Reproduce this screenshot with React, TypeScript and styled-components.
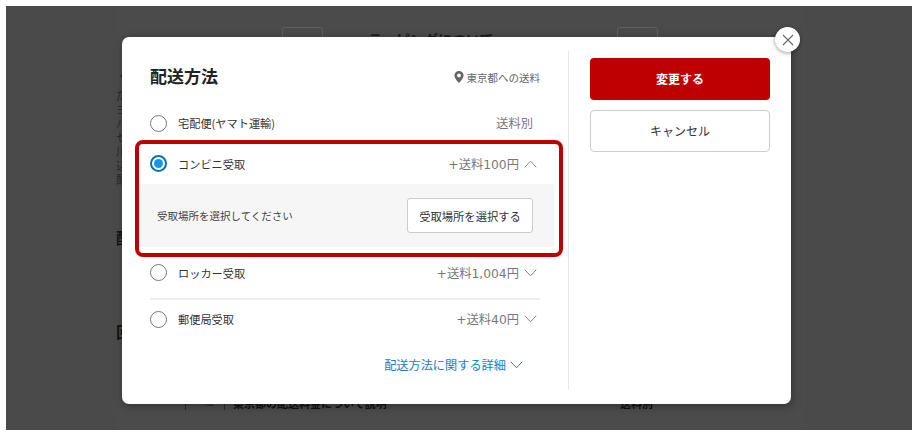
import React from "react";
import styled, { createGlobalStyle } from "styled-components";

const Global = createGlobalStyle`
  html, body { margin: 0; padding: 0; background: #fff; }
  body { font-family: "Noto Sans CJK JP", "Noto Sans", sans-serif; overflow: hidden; }
  * { box-sizing: border-box; }
`;

const Stage = styled.div`
  padding: 6px;
  width: 918px;
  height: 435px;
`;
const Backdrop = styled.div`
  position: relative;
  width: 906px;
  height: 424px;
  background: #4a4a4a;
  overflow: hidden;
`;
const Sheet = styled.div`
  margin-left: 110px;
  padding-top: 21px;
  width: 690px;
  height: 424px;
  background: #4b4b4b;
  color: #222;
  white-space: nowrap;
  overflow: hidden;
`;
const SheetTop = styled.div`
  display: flex;
  align-items: flex-start;
  height: 10px;
  overflow: hidden;
`;
const GhostButton = styled.div<{ $left: number }>`
  flex: none;
  margin-left: ${(p) => p.$left}px;
  width: 41px;
  height: 30px;
  border: 1px solid #5e5e5e;
  border-radius: 3px;
  font-size: 11px;
  line-height: 26px;
  text-align: center;
  color: #333;
`;
const SheetTitle = styled.div`
  flex: none;
  margin-left: 45px;
  margin-top: 2px;
  width: 249px;
  font-size: 14px;
  line-height: 20px;
  font-weight: 700;
  color: #1d1d1d;
`;
const EdgeStrip = styled.div`
  width: 6px;
  overflow: hidden;
`;
const NoteStrip = styled(EdgeStrip)`
  margin-top: 31px;
`;
const NoteLine = styled.div`
  font-size: 11px;
  line-height: 14px;
  color: #2a2a2a;
`;
const Notes = styled.div`
  margin-top: 6px;
`;
const SheetHeading = styled(EdgeStrip)<{ $before: number }>`
  margin-top: ${(p) => p.$before}px;
  font-size: 16px;
  line-height: 18px;
  font-weight: 700;
  color: #151515;
`;
const SheetRow = styled.div`
  display: flex;
  align-items: flex-end;
  height: 6px;
  margin-top: 64px;
  padding-left: 69px;
  overflow: hidden;
  font-size: 11px;
  line-height: 13px;
`;
const SheetTag = styled.span`
  flex: none;
  width: 40px;
  height: 16px;
  border: 1px solid #2a2a2a;
  border-bottom: 0;
  margin-right: 8px;
  font-size: 9px;
  text-align: center;
`;
const SheetStrong = styled.span`
  flex: none;
  width: 295px;
  font-weight: 700;
  color: #111;
`;
const SheetFee = styled.span`
  margin-left: 92px;
  font-weight: 700;
  color: #111;
`;

const Modal = styled.div`
  position: absolute;
  left: 116px;
  top: 31px;
  width: 669px;
  height: 367px;
  background: #fff;
  border-radius: 7px;
  box-shadow: 1px 2px 8px rgba(0, 0, 0, 0.35);
  display: flex;
  align-items: stretch;
`;
const MainCol = styled.section`
  position: relative;
  width: 447px;
  margin: 14px 0 14px;
  padding: 0 28px;
  border-right: 1px solid #e8e8e8;
`;
const Header = styled.header`
  display: flex;
  align-items: center;
  justify-content: space-between;
  height: 52px;
`;
const Title = styled.h2`
  margin: 0 0 2px;
  font-size: 17px;
  line-height: 24px;
  font-weight: 600;
  color: #222;
`;
const Destination = styled.div`
  display: flex;
  align-items: center;
  gap: 3px;
  font-size: 10.5px;
  color: #666;
`;
const Row = styled.div<{ $h: number; $line?: boolean }>`
  display: flex;
  align-items: center;
  height: ${(p) => p.$h}px;
  border-bottom: ${(p) => (p.$line ? "2px solid #eee" : "0")};
`;
const Radio = styled.span<{ $on?: boolean }>`
  flex: none;
  width: 17px;
  height: 17px;
  border-radius: 50%;
  border: ${(p) => (p.$on ? "2px solid #0d6fb3" : "1.5px solid #777")};
  display: flex;
  align-items: center;
  justify-content: center;
  margin-right: 11px;
  &::after {
    content: "";
    display: ${(p) => (p.$on ? "block" : "none")};
    width: 9px;
    height: 9px;
    border-radius: 50%;
    background: #0b98f0;
  }
`;
const Label = styled.span`
  flex: 1;
  font-size: 11.2px;
  color: #333;
`;
const Price = styled.span<{ $pad?: number }>`
  font-family: "DejaVu Sans", "Noto Sans CJK JP", sans-serif;
  font-size: 12.3px;
  color: #777;
  padding-right: ${(p) => p.$pad ?? 0}px;
`;
const ChevronBox = styled.svg`
  flex: none;
  display: block;
  width: 13px;
  height: 8px;
`;
const RowChevron = styled(ChevronBox)`
  margin: 0 3px 0 5px;
`;
const Detail = styled.div`
  display: flex;
  align-items: center;
  justify-content: space-between;
  margin: 0 -14px;
  padding: 0 21px;
  height: 63px;
  background: #f6f6f6;
  font-size: 10.5px;
  color: #444;
`;
const PickButton = styled.button`
  width: 126px;
  height: 35px;
  padding: 0;
  background: #fff;
  border: 1px solid #ccc;
  border-radius: 3px;
  font: inherit;
  font-size: 11.3px;
  color: #333;
`;
const MoreLink = styled.a`
  display: flex;
  align-items: center;
  justify-content: flex-end;
  gap: 4px;
  margin-top: 15px;
  padding-right: 17px;
  height: 24px;
  font-size: 12.2px;
  color: #1a7dbd;
`;
const Highlight = styled.div`
  position: absolute;
  left: -1px;
  top: 89px;
  margin-left: 14px;
  width: 428px;
  height: 117px;
  border: 4px solid #bf0000;
  border-radius: 8px;
  pointer-events: none;
`;
const SideCol = styled.aside`
  flex: 1;
  padding: 21px 21px 0;
  display: flex;
  flex-direction: column;
  gap: 10px;
`;
const Action = styled.button<{ $primary?: boolean }>`
  width: 180px;
  height: 42px;
  padding: 0 0 2px;
  border-radius: 4px;
  font-family: inherit;
  font-size: 12px;
  font-weight: ${(p) => (p.$primary ? 700 : 400)};
  color: ${(p) => (p.$primary ? "#fff" : "#333")};
  background: ${(p) => (p.$primary ? "#bf0000" : "#fff")};
  border: ${(p) => (p.$primary ? "0" : "1px solid #ccc")};
`;
const Close = styled.button`
  position: absolute;
  left: 653px;
  top: -10px;
  width: 25px;
  height: 25px;
  padding: 0;
  border: 0;
  border-radius: 50%;
  background: #fff;
  box-shadow: 0 1px 4px rgba(0, 0, 0, 0.4);
  display: flex;
  align-items: center;
  justify-content: center;
`;

const Chevron = ({ up, color = "#888" }: { up?: boolean; color?: string }) => (
  <RowChevron viewBox="0 0 13 8" fill="none" stroke={color} strokeWidth="1">
    <path d={up ? "M.8 7.2 6.5 1.2l5.7 6" : "M.8.8l5.7 6 5.7-6"} />
  </RowChevron>
);

const PinIcon = () => (
  <svg width="10" height="12" viewBox="0 0 10 12">
    <path
      fill="#666"
      fillRule="evenodd"
      d="M5 0a4.6 4.6 0 0 0-4.6 4.6C.4 8 5 12 5 12s4.6-4 4.6-7.4A4.6 4.6 0 0 0 5 0Zm0 6.4a1.9 1.9 0 1 1 0-3.8 1.9 1.9 0 0 1 0 3.8Z"
    />
  </svg>
);

const notes = ["だ", "ヨ", "ハ", "セ", "川", "込", "配"];

export default function App() {
  return (
    <Stage>
      <Global />
      <Backdrop>
        <Sheet>
          <SheetTop>
            <GhostButton $left={166}>1 冊</GhostButton>
            <SheetTitle>ラッピングについて</SheetTitle>
            <GhostButton $left={0}>1 冊</GhostButton>
          </SheetTop>
          <NoteStrip>
            <NoteLine>・</NoteLine>
            <Notes>
              {notes.map((n) => (
                <NoteLine key={n}>{n}</NoteLine>
              ))}
            </Notes>
          </NoteStrip>
          <SheetHeading $before={42}>配</SheetHeading>
          <SheetHeading $before={76}>回</SheetHeading>
          <SheetRow>
            <SheetTag>一般</SheetTag>
            <SheetStrong>東京都の配送料金について説明</SheetStrong>
            <SheetFee>送料別</SheetFee>
          </SheetRow>
        </Sheet>

        <Modal>
          <MainCol>
            <Header>
              <Title>配送方法</Title>
              <Destination>
                <PinIcon />
                東京都への送料
              </Destination>
            </Header>
            <Row $h={40}>
              <Radio />
              <Label>宅配便(ヤマト運輸)</Label>
              <Price $pad={7}>送料別</Price>
            </Row>
            <Row $h={41}>
              <Radio $on />
              <Label>コンビニ受取</Label>
              <Price>+送料100円</Price>
              <Chevron up />
            </Row>
            <Detail>
              受取場所を選択してください
              <PickButton>受取場所を選択する</PickButton>
            </Detail>
            <Row $h={53} $line>
              <Radio />
              <Label>ロッカー受取</Label>
              <Price>+送料1,004円</Price>
              <Chevron />
            </Row>
            <Row $h={38}>
              <Radio />
              <Label>郵便局受取</Label>
              <Price>+送料40円</Price>
              <Chevron />
            </Row>
            <MoreLink>
              配送方法に関する詳細
              <ChevronBox viewBox="0 0 13 8" fill="none" stroke="#1a7dbd" strokeWidth="1">
                <path d="M.8.8l5.7 6 5.7-6" />
              </ChevronBox>
            </MoreLink>
            <Highlight />
          </MainCol>
          <SideCol>
            <Action $primary>変更する</Action>
            <Action>キャンセル</Action>
          </SideCol>
          <Close aria-label="閉じる">
            <svg width="12" height="12" viewBox="0 0 12 12" fill="none" stroke="#666" strokeWidth="1.1">
              <path d="M1 1l10 10M11 1 1 11" />
            </svg>
          </Close>
        </Modal>
      </Backdrop>
    </Stage>
  );
}
